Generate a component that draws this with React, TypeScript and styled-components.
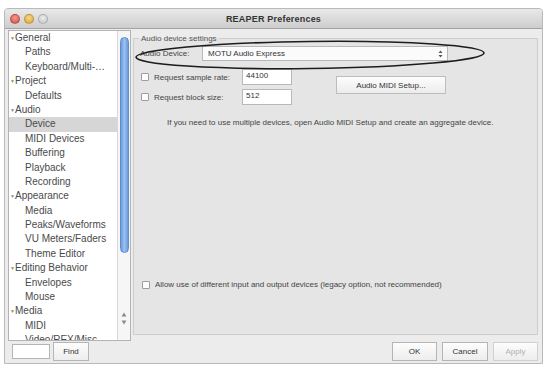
import React from "react";
import styled, { createGlobalStyle } from "styled-components";

const GlobalStyle = createGlobalStyle`
  html, body { margin: 0; padding: 0; background: #ffffff; }
  body { font-family: "Liberation Sans", Arial, sans-serif; width: 545px; height: 365px; overflow: hidden; }
  * { box-sizing: border-box; }
`;

const Window = styled.div`
  position: relative;
  margin: 8px 0 0 4px;
  width: 539px;
  height: 356px;
  background: #ececec;
  border: 1px solid #b9b9b9;
  border-radius: 4px 4px 0 0;
  display: flex;
  flex-direction: column;
  overflow: hidden;
`;

const TitleBar = styled.div`
  height: 20px;
  flex: none;
  display: grid;
  grid-template-columns: 1fr auto 1fr;
  align-items: center;
  background: linear-gradient(#e9e9e9, #cdcdcd);
  border-bottom: 1px solid #a3a3a3;
`;

const Lights = styled.div`
  display: flex;
  gap: 4px;
  padding-left: 5px;
`;

const Light = styled.span<{ $c: string; $e: string }>`
  width: 10px;
  height: 10px;
  border-radius: 50%;
  background: radial-gradient(circle at 50% 35%, ${(p) => p.$e}, ${(p) => p.$c});
  border: 1px solid rgba(0, 0, 0, 0.18);
`;

const Title = styled.div`
  font-size: 9px;
  color: #333;
  letter-spacing: 0.2px;
  font-weight: bold;
`;

const Content = styled.div`
  flex: 1;
  display: grid;
  grid-template-columns: 123px 1fr;
  grid-template-rows: 1fr 21px;
  column-gap: 2px;
  padding: 1px 4px 1px 3px;
  min-height: 0;
`;

const ListBox = styled.div`
  display: flex;
  background: #ffffff;
  border: 1px solid #b3b3b3;
  min-height: 0;
  overflow: hidden;
`;

const Items = styled.div`
  flex: 1;
  overflow: hidden;
`;

const Item = styled.div<{ $header?: boolean; $selected?: boolean }>`
  height: 14.4px;
  line-height: 14.4px;
  font-size: 10px;
  color: #4a4a4a;
  white-space: nowrap;
  padding-left: ${(p) => (p.$header ? "1px" : "16px")};
  background: ${(p) => (p.$selected ? "#d6d6d6" : "transparent")};
  display: flex;
  align-items: center;
`;

const Caret = styled.span`
  font-size: 5px;
  color: #8a8a8a;
  width: 5px;
`;

const ScrollTrack = styled.div`
  width: 13px;
  flex: none;
  border-left: 1px solid #d9d9d9;
  background: #f6f6f6;
  display: flex;
  flex-direction: column;
  align-items: center;
  padding-top: 6px;
`;

const Thumb = styled.div`
  width: 9px;
  height: 216px;
  border-radius: 5px;
  background: linear-gradient(90deg, #6d9ee0, #9cc0ef 50%, #6a99da);
  border: 1px solid #5d8ccf;
`;

const Arrows = styled.div`
  margin-top: auto;
  margin-bottom: 15px;
  display: flex;
  flex-direction: column;
  gap: 3px;
  align-items: center;
`;

const Main = styled.fieldset`
  margin: 4px 0 6px 0;
  padding: 0;
  border: 1px solid #cdcdcd;
  background: #e5e5e5;
  display: flex;
  flex-direction: column;
  min-width: 0;
`;

const Legend = styled.legend`
  font-size: 8px;
  color: #555;
  padding: 0 2px;
  margin-left: 5px;
  line-height: 9px;
`;

const DeviceRow = styled.div`
  display: flex;
  align-items: center;
  margin-top: 3px;
  padding-left: 6px;
  height: 15px;
`;

const Label = styled.span`
  font-size: 8px;
  color: #444;
  white-space: nowrap;
`;

const DeviceLabel = styled(Label)`
  width: 62px;
`;

const Select = styled.div`
  width: 246px;
  height: 15px;
  background: #fbfbfb;
  border: 1px solid #b8b8b8;
  display: flex;
  align-items: center;
  justify-content: space-between;
  padding: 0 4px 0 5px;
  font-size: 8px;
  color: #333;
`;

const Settings = styled.div`
  display: grid;
  grid-template-columns: 101px 50px 44px 110px;
  grid-template-rows: 16px 16px;
  row-gap: 4px;
  margin-top: 8px;
  padding-left: 7px;
  align-items: center;
`;

const CheckRow = styled.div<{ $row?: number }>`
  display: flex;
  align-items: center;
  gap: 5px;
  grid-column: 1;
  grid-row: ${(p) => p.$row ?? "auto"};
`;

const Check = styled.span`
  width: 8px;
  height: 8px;
  flex: none;
  background: #fdfdfd;
  border: 1px solid #9d9d9d;
  border-radius: 1px;
`;

const TextInput = styled.div<{ $row: number }>`
  grid-column: 2;
  grid-row: ${(p) => p.$row};
  height: 16px;
  background: #ffffff;
  border: 1px solid #b8b8b8;
  font-size: 8px;
  color: #333;
  padding: 1px 3px;
  line-height: 10px;
`;

const SetupButton = styled.div`
  grid-column: 4;
  grid-row: 1 / span 2;
  height: 18px;
  align-self: center;
  margin-top: -4px;
  background: linear-gradient(#fdfdfd, #ececec);
  border: 1px solid #bdbdbd;
  font-size: 8px;
  color: #333;
  display: flex;
  align-items: center;
  justify-content: center;
`;

const Info = styled(Label)`
  margin-top: 13px;
  padding-left: 33px;
  color: #444;
`;

const AllowRow = styled.div`
  display: flex;
  align-items: center;
  gap: 5px;
  margin-top: auto;
  margin-bottom: 45px;
  padding-left: 8px;
`;

const Footer = styled.div`
  grid-column: 1 / span 2;
  display: flex;
  align-items: center;
  padding-left: 4px;
`;

const FindInput = styled.div`
  width: 38px;
  height: 15px;
  background: #ffffff;
  border: 1px solid #b5b5b5;
`;

const Button = styled.div<{ $disabled?: boolean; $w: number }>`
  width: ${(p) => p.$w}px;
  height: 19px;
  background: linear-gradient(#fdfdfd, #ededed);
  border: 1px solid ${(p) => (p.$disabled ? "#d0d0d0" : "#b5b5b5")};
  font-size: 8px;
  color: ${(p) => (p.$disabled ? "#b0b0b0" : "#333")};
  display: flex;
  align-items: center;
  justify-content: center;
`;

const FindButton = styled(Button)`
  margin-left: 3px;
`;

const ButtonGroup = styled.div`
  margin-left: auto;
  display: flex;
  gap: 5px;
`;

const Annotation = styled.svg`
  position: absolute;
  left: 124px;
  top: 28px;
  pointer-events: none;
`;

type Entry = { label: string; header?: boolean; selected?: boolean };

const entries: Entry[] = [
  { label: "General", header: true },
  { label: "Paths" },
  { label: "Keyboard/Multi-…" },
  { label: "Project", header: true },
  { label: "Defaults" },
  { label: "Audio", header: true },
  { label: "Device", selected: true },
  { label: "MIDI Devices" },
  { label: "Buffering" },
  { label: "Playback" },
  { label: "Recording" },
  { label: "Appearance", header: true },
  { label: "Media" },
  { label: "Peaks/Waveforms" },
  { label: "VU Meters/Faders" },
  { label: "Theme Editor" },
  { label: "Editing Behavior", header: true },
  { label: "Envelopes" },
  { label: "Mouse" },
  { label: "Media", header: true },
  { label: "MIDI" },
  { label: "Video/REX/Misc" },
];

export default function App() {
  return (
    <>
      <GlobalStyle />
      <Window>
        <TitleBar>
          <Lights>
            <Light $c="#d2493f" $e="#f59a8c" />
            <Light $c="#dca230" $e="#f6d98a" />
            <Light $c="#c4c4c4" $e="#ececec" />
          </Lights>
          <Title>REAPER Preferences</Title>
          <span />
        </TitleBar>
        <Content>
          <ListBox>
            <Items>
              {entries.map((e, i) => (
                <Item key={i} $header={e.header} $selected={e.selected}>
                  {e.header && <Caret>▼</Caret>}
                  {e.label}
                </Item>
              ))}
            </Items>
            <ScrollTrack>
              <Thumb />
              <Arrows>
                <svg width="6" height="5" viewBox="0 0 6 5">
                  <path d="M3 0.5 L5.5 4.5 L0.5 4.5 Z" fill="#8c8c8c" />
                </svg>
                <svg width="6" height="5" viewBox="0 0 6 5">
                  <path d="M0.5 0.5 L5.5 0.5 L3 4.5 Z" fill="#8c8c8c" />
                </svg>
              </Arrows>
            </ScrollTrack>
          </ListBox>
          <Main>
            <Legend>Audio device settings</Legend>
            <DeviceRow>
              <DeviceLabel>Audio Device:</DeviceLabel>
              <Select>
                <span>MOTU Audio Express</span>
                <svg width="5" height="8" viewBox="0 0 5 8">
                  <path d="M2.5 0.5 L4.5 3 L0.5 3 Z" fill="#555" />
                  <path d="M0.5 5 L4.5 5 L2.5 7.5 Z" fill="#555" />
                </svg>
              </Select>
            </DeviceRow>
            <Settings>
              <CheckRow $row={1}>
                <Check />
                <Label>Request sample rate:</Label>
              </CheckRow>
              <TextInput $row={1}>44100</TextInput>
              <SetupButton>Audio MIDI Setup...</SetupButton>
              <CheckRow $row={2}>
                <Check />
                <Label>Request block size:</Label>
              </CheckRow>
              <TextInput $row={2}>512</TextInput>
            </Settings>
            <Info>
              If you need to use multiple devices, open Audio MIDI Setup and create an aggregate device.
            </Info>
            <AllowRow>
              <Check />
              <Label>Allow use of different input and output devices (legacy option, not recommended)</Label>
            </AllowRow>
          </Main>
          <Footer>
            <FindInput />
            <FindButton $w={36}>Find</FindButton>
            <ButtonGroup>
              <Button $w={45}>OK</Button>
              <Button $w={46}>Cancel</Button>
              <Button $w={45} $disabled>
                Apply
              </Button>
            </ButtonGroup>
          </Footer>
        </Content>
        <Annotation width="362" height="36" viewBox="0 0 362 36">
          <ellipse
            cx="181"
            cy="18"
            rx="174"
            ry="13.5"
            fill="none"
            stroke="#1c1c1c"
            strokeWidth="1.6"
            transform="rotate(-0.7 181 18)"
          />
        </Annotation>
      </Window>
    </>
  );
}
